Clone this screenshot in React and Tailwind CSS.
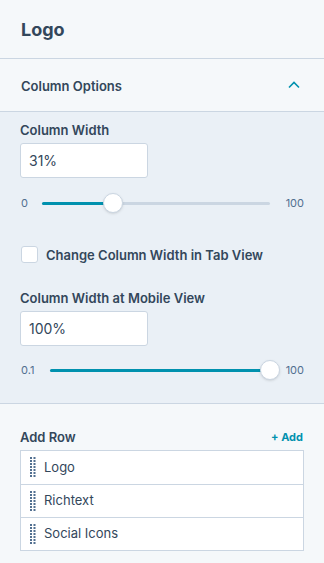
import React, { useState } from 'react';

const font = { fontFamily: 'Inter, "Noto Sans", sans-serif' };

function Grip() {
  const dots = [];
  for (let r = 0; r < 7; r++) {
    for (let c = 0; c < 2; c++) {
      dots.push(<rect key={`${r}-${c}`} x={c * 3.5} y={r * 3} width="2" height="2" fill="#516f90" />);
    }
  }
  return (
    <svg width="6" height="21" viewBox="0 0 6 21" className="shrink-0">
      {dots}
    </svg>
  );
}

function Slider({ min, max, pct, trackLeft }) {
  return (
    <div className="flex items-center h-[22px] text-[11px] text-[#516f90]">
      <span className={trackLeft}>{min}</span>
      <div className="relative flex-1 h-[3px] bg-[#cbd6e2] rounded-full">
        <div className="absolute left-0 top-0 h-[3px] bg-[#0091ae] rounded-full" style={{ width: `${pct}%` }} />
        <div
          className="absolute top-1/2 w-[20px] h-[20px] -mt-[10px] -ml-[10px] rounded-full bg-white border border-[#cbd6e2] shadow-sm"
          style={{ left: `${pct}%` }}
        />
      </div>
      <span className="ml-[14px] w-[20px] text-right">{max}</span>
    </div>
  );
}

function App() {
  const [tab, setTab] = useState(false);
  const rows = ['Logo', 'Richtext', 'Social Icons'];

  return (
    <div className="w-[324px] h-[563px] bg-[#f5f8fa] text-[#33475b] overflow-hidden" style={font}>
      <div className="h-[59px] px-[21px] flex items-center border-b border-[#cbd6e2]">
        <h1 className="text-[18px] font-bold">Logo</h1>
      </div>

      <div className="h-[53px] px-[21px] flex items-center justify-between border-b border-[#cbd6e2]">
        <span className="text-[13px] leading-[16px] font-semibold mt-[2px]">Column Options</span>
        <svg width="12" height="8" viewBox="0 0 12 8" className="mr-[3px]">
          <path d="M1 6.5 L6 1.5 L11 6.5" fill="none" stroke="#0091ae" strokeWidth="1.6" />
        </svg>
      </div>

      <div className="bg-[#eaf0f6] px-[20px] pt-[10px] pb-[22px] border-b border-[#cbd6e2]">
        <label className="block text-[13px] leading-[16px] font-semibold mb-[5px]">Column Width</label>
        <div className="w-[128px] h-[35px] bg-white border border-[#cbd6e2] rounded-[3px] flex items-center px-[8px] text-[14px]">
          31%
        </div>
        <div className="mt-[14px]">
          <Slider min="0" max="100" pct={31} trackLeft="w-[22px] pl-[1px]" />
        </div>

        <div className="flex items-center mt-[31px] h-[19px]" onClick={() => setTab(!tab)}>
          <div className="w-[17px] h-[17px] bg-white border border-[#cbd6e2] rounded-[3px] ml-[1px]" />
          <span className="ml-[8px] text-[13px] leading-[16px] font-semibold">Change Column Width in Tab View</span>
        </div>

        <label className="block text-[13px] leading-[16px] font-semibold mt-[26px] mb-[5px]">Column Width at Mobile View</label>
        <div className="w-[128px] h-[35px] bg-white border border-[#cbd6e2] rounded-[3px] flex items-center px-[8px] text-[14px]">
          100%
        </div>
        <div className="mt-[13px]">
          <Slider min="0.1" max="100" pct={100} trackLeft="w-[30px] pl-[1px]" />
        </div>
      </div>

      <div className="px-[20px] pt-[25px]">
        <div className="flex items-center justify-between mb-[5px]">
          <span className="text-[13px] leading-[16px] font-semibold">Add Row</span>
          <span className="text-[11px] leading-[16px] font-bold text-[#0091ae] mr-[1px]">+ Add</span>
        </div>
        <div className="bg-white border border-[#cbd6e2]">
          {rows.map((r, i) => (
            <div
              key={r}
              className={`h-[33px] flex items-center px-[9px] gap-[8px] ${i > 0 ? 'border-t border-[#cbd6e2]' : ''}`}
            >
              <Grip />
              <span className="text-[13px]">{r}</span>
            </div>
          ))}
        </div>
      </div>
    </div>
  );
}

export default App;
